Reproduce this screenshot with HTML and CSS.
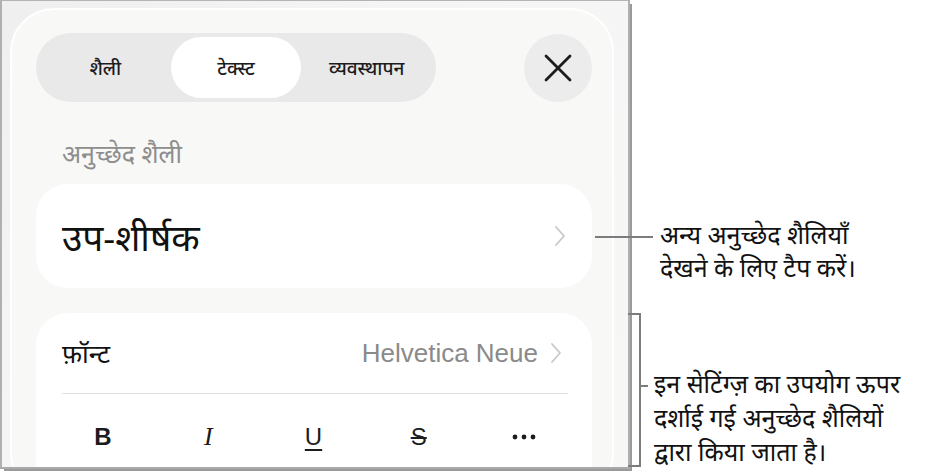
FILE: index.html
```html
<!DOCTYPE html>
<html lang="hi">
<head>
<meta charset="utf-8">
<link rel="stylesheet" href="styles.css">
</head>
<body>
<div class="stage">
  <div class="frame">
    <div class="panel">
      <div class="topbar">
        <div class="segmented">
          <div class="seg">शैली</div>
          <div class="seg seg-on">टेक्स्ट</div>
          <div class="seg">व्यवस्थापन</div>
        </div>
        <div class="close">
          <svg width="28" height="28" viewBox="0 0 28 28"><path d="M2 2 L26 26 M26 2 L2 26" stroke="#1c1c1e" stroke-width="2.8" stroke-linecap="round" fill="none"/></svg>
        </div>
      </div>
      <div class="section-label">अनुच्छेद शैली</div>
      <div class="card card-style">
        <span class="style-name">उप-शीर्षक</span>
        <svg class="chev" width="12" height="22" viewBox="0 0 12 22"><path d="M2 2 L10 11 L2 20" stroke="#c7c7c7" stroke-width="1.8" fill="none" stroke-linecap="round" stroke-linejoin="round"/></svg>
      </div>
      <div class="card card-font">
        <div class="font-row">
          <span class="font-label">फ़ॉन्ट</span>
          <span class="font-value">Helvetica Neue
            <svg class="chev" width="12" height="22" viewBox="0 0 12 22"><path d="M2 2 L10 11 L2 20" stroke="#c7c7c7" stroke-width="1.8" fill="none" stroke-linecap="round" stroke-linejoin="round"/></svg>
          </span>
        </div>
        <div class="divider"></div>
        <div class="format-row">
          <span class="fmt fmt-b">B</span>
          <span class="fmt fmt-i">I</span>
          <span class="fmt fmt-u">U</span>
          <span class="fmt fmt-s">S</span>
          <span class="fmt fmt-more">
            <svg width="24" height="6" viewBox="0 0 24 6"><circle cx="3" cy="3" r="2.4" fill="#1c1c1e"/><circle cx="12" cy="3" r="2.4" fill="#1c1c1e"/><circle cx="21" cy="3" r="2.4" fill="#1c1c1e"/></svg>
          </span>
        </div>
      </div>
    </div>
  </div>

  <div class="callout callout-one">
    <span class="leader"></span>
    <p class="note">अन्य अनुच्छेद शैलियाँ<br>देखने के लिए टैप करें।</p>
  </div>

  <div class="callout callout-two">
    <div class="bracket"><span class="tick"></span></div>
    <p class="note">इन सेटिंग्ज़ का उपयोग ऊपर<br>दर्शाई गई अनुच्छेद शैलियों<br>द्वारा किया जाता है।</p>
  </div>
</div>
</body>
</html>
```

FILE: styles.css
```css
* { box-sizing: border-box; }

html, body {
  margin: 0;
  padding: 0;
  background: #ffffff;
}

body {
  font-family: "Noto Sans", "Noto Sans Devanagari", "Lohit Devanagari", sans-serif;
  color: #1c1c1e;
  width: 931px;
  height: 471px;
  overflow: hidden;
}

.stage {
  position: relative;
  width: 931px;
  height: 471px;
}

.frame {
  width: 630px;
  height: 469px;
  border-top: 1px solid #b4b4b4;
  border-left: 2px solid #b0b0b0;
  border-right: 2px solid #b0b0b0;
  border-bottom: 2px solid #a9a9a9;
  background: linear-gradient(135deg, #efefef 0%, #f5f5f5 40%, #f7f7f6 100%);
  padding: 7px 14px 0 8px;
  overflow: hidden;
  box-shadow: 3px 3px 0 -1px #9a9a9a;
}

.panel {
  height: 490px;
  background: #f8f8f7;
  border: 2px solid #ffffff;
  border-radius: 44px;
  padding: 23px 20px 0 24px;
}

.topbar {
  display: flex;
  justify-content: space-between;
  align-items: center;
}

.segmented {
  width: 400px;
  height: 69px;
  background: #e9e9e9;
  border-radius: 35px;
  padding: 4px;
  display: grid;
  grid-template-columns: 1fr 1fr 1fr;
}

.seg {
  display: flex;
  align-items: center;
  justify-content: center;
  font-size: 19px;
  font-weight: 500;
  color: #1c1c1e;
  border-radius: 31px;
}

.seg-on {
  background: #ffffff;
}

.close {
  width: 68px;
  height: 68px;
  border-radius: 50%;
  background: #ececec;
  display: flex;
  align-items: center;
  justify-content: center;
}

.section-label {
  font-size: 25px;
  color: #8e8e8e;
  padding: 33px 0 0 26px;
  height: 82px;
  line-height: 36px;
}

.card {
  background: #ffffff;
  border-radius: 32px;
}

.card-style {
  height: 104px;
  display: flex;
  align-items: center;
  justify-content: space-between;
  padding: 0 26px 0 26px;
}

.style-name {
  font-size: 37px;
  color: #111111;
}

.chev {
  display: block;
}

.card-font {
  margin-top: 25px;
  height: 200px;
  padding: 0 26px 0 26px;
}

.font-row {
  height: 80px;
  display: flex;
  align-items: center;
  justify-content: space-between;
}

.font-label {
  font-size: 26px;
  color: #111111;
}

.font-value {
  display: flex;
  align-items: center;
  gap: 12px;
  margin-right: 4px;
  font-family: "Liberation Sans", Arial, sans-serif;
  font-size: 26px;
  color: #8a8a8a;
}

.divider {
  height: 1px;
  background: #e2e2e2;
  margin-right: -2px;
}

.format-row {
  height: 86px;
  display: flex;
  align-items: center;
  justify-content: space-between;
  padding: 0 22px 0 21px;
}

.fmt {
  width: 40px;
  display: flex;
  justify-content: center;
  font-family: "Liberation Sans", Arial, sans-serif;
  font-size: 24px;
  color: #1c1c1e;
}

.fmt-b { font-weight: 700; }
.fmt-i { font-family: "Liberation Serif", serif; font-style: italic; font-size: 26px; }
.fmt-u { text-decoration: underline; text-underline-offset: 4px; text-decoration-thickness: 2px; }
.fmt-s { text-decoration: line-through; text-decoration-thickness: 2px; }

.callout {
  position: absolute;
  display: flex;
}

.note {
  margin: 0;
  font-size: 25px;
  color: #111111;
}

.callout-one {
  left: 595px;
  top: 218px;
  align-items: flex-start;
}

.callout-one .leader {
  width: 58px;
  height: 2px;
  background: #7c7c7c;
  margin-top: 18px;
  margin-right: 7px;
}

.callout-one .note {
  line-height: 33px;
}

.callout-two {
  left: 628px;
  top: 313px;
  align-items: flex-start;
}

.bracket {
  position: relative;
  width: 13px;
  height: 154px;
  border-top: 2px solid #7c7c7c;
  border-right: 2px solid #7c7c7c;
  border-bottom: 2px solid #7c7c7c;
}

.tick {
  position: absolute;
  right: -9px;
  top: 70px;
  width: 8px;
  height: 2px;
  background: #7c7c7c;
}

.callout-two .note {
  margin-left: 13px;
  margin-top: 53px;
  line-height: 34px;
}
```
